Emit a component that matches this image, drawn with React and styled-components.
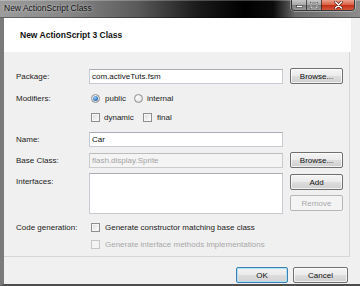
import React from "react";
import styled, { createGlobalStyle, css } from "styled-components";

const Global = createGlobalStyle`
  html, body { margin: 0; padding: 0; }
  body {
    width: 360px; height: 286px; overflow: hidden;
    font-family: "Liberation Sans", Arial, sans-serif;
    background: #f0f0f0;
  }
  * { box-sizing: border-box; }
`;

const Window = styled.div`
  width: 360px;
  height: 286px;
  display: flex;
  flex-direction: column;
  background: #f0f0f0;
  overflow: hidden;
`;

const TitleBar = styled.div`
  height: 18px;
  flex: none;
  display: flex;
  align-items: flex-start;
  background: linear-gradient(90deg, #9c9c9c 0%, #858585 20%, #5a5a5a 38%, #1a1a1a 55%, #000 68%, #0c0c0c 76%, #6a6a6a 82%, #8c8c8c 100%);
  box-shadow: inset 0 1px 0 rgba(255,255,255,0.25), inset 0 -1px 0 rgba(0,0,0,0.35);
`;

const TitleText = styled.div`
  padding-left: 4px;
  line-height: 17px;
  font-size: 8.5px;
  color: #111;
  text-shadow: 0 0 3px rgba(255,255,255,0.7);
  white-space: nowrap;
`;

const Controls = styled.div`
  margin-left: auto;
  margin-right: 5px;
  display: flex;
  height: 11px;
  border: 1px solid rgba(40,40,40,0.8);
  border-top: none;
  border-radius: 0 0 4px 4px;
  overflow: hidden;
  box-shadow: 0 0 0 1px rgba(255,255,255,0.35);
`;

const CtrlButton = styled.div`
  width: ${(p) => p.$w}px;
  height: 100%;
  display: flex;
  align-items: center;
  justify-content: center;
  border-left: ${(p) => (p.$first ? "none" : "1px solid rgba(30,30,30,0.7)")};
  background: ${(p) =>
    p.$close
      ? "linear-gradient(#eba390 0%, #dc6547 45%, #c4321a 55%, #d2583a 100%)"
      : "linear-gradient(#c8c8c8 0%, #a8a8a8 45%, #7e7e7e 55%, #9a9a9a 100%)"};
`;

const Frame = styled.div`
  flex: 1;
  display: flex;
  flex-direction: column;
  border-left: 4px solid #7a7a7a;
  border-bottom: 2px solid #4d4d4d;
  min-height: 0;
`;

const Header = styled.div`
  height: 34px;
  width: 347px;
  flex: none;
  background: #fff;
  display: flex;
  align-items: center;
  padding-left: 16px;
  font-size: 8.5px;
  font-weight: bold;
  color: #111;
`;

const Panel = styled.div`
  width: 346px;
  height: 205px;
  flex: none;
  border-right: 1px solid #d6d6d6;
  border-bottom: 1px solid #d6d6d6;
  padding: 16px 0 0 12px;
  display: flex;
  flex-direction: column;
`;

const Row = styled.div`
  display: grid;
  grid-template-columns: 66px 194px 53px;
  column-gap: 7px;
  height: ${(p) => p.$h}px;
  margin-top: ${(p) => p.$mt || 0}px;
  align-items: ${(p) => (p.$top ? "start" : "center")};
`;

const Label = styled.div`
  font-size: 8px;
  color: #222;
  white-space: nowrap;
  padding-top: ${(p) => p.$pt || 0}px;
`;

const Field = styled.div`
  height: ${(p) => p.$h || 15}px;
  border: 1px solid ${(p) => (p.$disabled ? "#cbcbcb" : "#c8ccd2")};
  border-top-color: ${(p) => (p.$disabled ? "#bdbdbd" : "#a9aeb5")};
  background: ${(p) => (p.$disabled ? "#f4f4f4" : "#fff")};
  color: ${(p) => (p.$disabled ? "#a3a3a3" : "#111")};
  font-size: 8px;
  line-height: 13px;
  padding-left: 2px;
  white-space: nowrap;
  overflow: hidden;
`;

const Button = styled.div`
  width: ${(p) => p.$w || 53}px;
  height: ${(p) => p.$h || 16}px;
  display: flex;
  align-items: center;
  justify-content: center;
  font-size: 8px;
  border-radius: 2px;
  border: 1px solid #707070;
  color: #111;
  background: linear-gradient(#f4f4f4 0%, #ebebeb 48%, #dddddd 52%, #cfcfcf 100%);
  box-shadow: inset 0 0 0 1px rgba(255,255,255,0.7);
  ${(p) =>
    p.$disabled &&
    css`
      border-color: #b5b8ba;
      color: #a8a8a8;
      background: #f4f4f4;
      box-shadow: none;
    `}
  ${(p) =>
    p.$default &&
    css`
      border-color: #3c7fb1;
      box-shadow: inset 0 0 0 1px #aee3f7;
      background: linear-gradient(#f2f2f2 0%, #eaeaea 48%, #dcdcdc 52%, #d2d2d2 100%);
    `}
`;

const ButtonStack = styled.div`
  display: flex;
  flex-direction: column;
  gap: 5px;
  padding-top: 1px;
`;

const Options = styled.div`
  display: flex;
  align-items: center;
  padding-left: 2px;
  grid-column: ${(p) => (p.$wide ? "2 / span 2" : "auto")};
`;

const Option = styled.div`
  display: flex;
  align-items: center;
  gap: ${(p) => p.$gap || 4}px;
  width: ${(p) => (p.$w ? `${p.$w}px` : "auto")};
  font-size: 8px;
  color: ${(p) => (p.$disabled ? "#a8a8a8" : "#222")};
  white-space: nowrap;
`;

const Box = styled.span`
  width: 9px;
  height: 9px;
  flex: none;
  border: 1px solid ${(p) => (p.$disabled ? "#c6c6c6" : "#8e8f8f")};
  background: ${(p) =>
    p.$disabled ? "#f4f4f4" : "linear-gradient(135deg, #d8d8d8 0%, #f0f0f0 60%, #fefefe 100%)"};
  box-shadow: inset 0 0 0 1px ${(p) => (p.$disabled ? "#f4f4f4" : "#f6f6f6")};
`;

const Radio = styled.span`
  width: 9px;
  height: 9px;
  flex: none;
  border-radius: 50%;
  border: 1px solid #8e8f8f;
  background: radial-gradient(circle at 40% 35%, #fff 0%, #e6e6e6 60%, #d0d0d0 100%);
  display: flex;
  align-items: center;
  justify-content: center;
  &::after {
    content: "";
    display: ${(p) => (p.$checked ? "block" : "none")};
    width: 5px;
    height: 5px;
    border-radius: 50%;
    background: radial-gradient(circle at 40% 35%, #9fd0f5 0%, #3a80c6 55%, #1c4f8c 100%);
  }
`;

const Footer = styled.div`
  flex: 1;
  display: flex;
  justify-content: flex-end;
  align-items: flex-start;
  gap: 5px;
  padding-top: 10px;
  padding-right: 12px;
`;

const MinIcon = () => (
  <svg width="7" height="6" viewBox="0 0 7 6">
    <rect x="0.5" y="3.5" width="6" height="2" fill="#fff" stroke="#333" strokeWidth="0.6" />
  </svg>
);
const MaxIcon = () => (
  <svg width="8" height="7" viewBox="0 0 8 7">
    <rect x="1" y="1" width="6" height="5" fill="none" stroke="#333" strokeWidth="2" />
    <rect x="1" y="1" width="6" height="5" fill="none" stroke="#fff" strokeWidth="1" />
  </svg>
);
const CloseIcon = () => (
  <svg width="9" height="8" viewBox="0 0 9 8">
    <path d="M1.5 1 L7.5 7 M7.5 1 L1.5 7" stroke="#4a1a10" strokeWidth="2.6" strokeLinecap="round" />
    <path d="M1.5 1 L7.5 7 M7.5 1 L1.5 7" stroke="#fff" strokeWidth="1.5" strokeLinecap="round" />
  </svg>
);

export default function App() {
  return (
    <>
      <Global />
      <Window>
        <TitleBar>
          <TitleText>New ActionScript Class</TitleText>
          <Controls>
            <CtrlButton $w={14} $first>
              <MinIcon />
            </CtrlButton>
            <CtrlButton $w={15}>
              <MaxIcon />
            </CtrlButton>
            <CtrlButton $w={33} $close>
              <CloseIcon />
            </CtrlButton>
          </Controls>
        </TitleBar>
        <Frame>
          <Header>New ActionScript 3 Class</Header>
          <Panel>
            <Row $h={16}>
              <Label>Package:</Label>
              <Field>com.activeTuts.fsm</Field>
              <Button>Browse...</Button>
            </Row>
            <Row $h={14} $mt={7}>
              <Label>Modifiers:</Label>
              <Options>
                <Option $w={43} $gap={5}>
                  <Radio $checked />
                  public
                </Option>
                <Option $gap={4}>
                  <Radio />
                  internal
                </Option>
              </Options>
            </Row>
            <Row $h={14} $mt={5}>
              <span />
              <Options>
                <Option $w={52} $gap={4}>
                  <Box />
                  dynamic
                </Option>
                <Option $gap={5}>
                  <Box />
                  final
                </Option>
              </Options>
            </Row>
            <Row $h={16} $mt={7}>
              <Label>Name:</Label>
              <Field>Car</Field>
            </Row>
            <Row $h={16} $mt={5}>
              <Label>Base Class:</Label>
              <Field $disabled>flash.display.Sprite</Field>
              <Button>Browse...</Button>
            </Row>
            <Row $h={41} $mt={5} $top>
              <Label $pt={4}>Interfaces:</Label>
              <Field $h={41} />
              <ButtonStack>
                <Button>Add</Button>
                <Button $disabled>Remove</Button>
              </ButtonStack>
            </Row>
            <Row $h={14} $mt={6}>
              <Label>Code generation:</Label>
              <Options $wide>
                <Option $gap={5}>
                  <Box />
                  Generate constructor matching base class
                </Option>
              </Options>
            </Row>
            <Row $h={14} $mt={3}>
              <span />
              <Options $wide>
                <Option $gap={5} $disabled>
                  <Box $disabled />
                  Generate interface methods implementations
                </Option>
              </Options>
            </Row>
          </Panel>
          <Footer>
            <Button $w={52} $default>
              OK
            </Button>
            <Button $w={55}>Cancel</Button>
          </Footer>
        </Frame>
      </Window>
    </>
  );
}
